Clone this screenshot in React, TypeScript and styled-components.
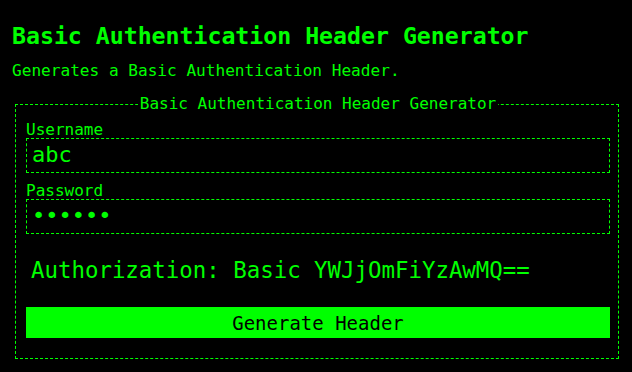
import React, { useState } from 'react';
import styled, { createGlobalStyle } from 'styled-components';

const GlobalStyle = createGlobalStyle`
  html, body {
    margin: 0;
    padding: 0;
    background: #000000;
  }
`;

const GREEN = '#00ff00';
const MONO = '"DejaVu Sans Mono", "Liberation Mono", monospace';

const Page = styled.div`
  background: #000000;
  color: ${GREEN};
  font-family: ${MONO};
  padding: 22px 13px 20px 12px;
  min-height: 372px;
  box-sizing: border-box;
`;

const Title = styled.h1`
  margin: 0;
  font-size: 23.2px;
  line-height: 28px;
  font-weight: bold;
`;

const Subtitle = styled.p`
  margin: 11px 0 0;
  font-size: 16.1px;
  line-height: 20px;
`;

const Panel = styled.fieldset`
  margin: 13px 0 0 3px;
  padding: 7px 8px 20px 10px;
  border: 1px dashed ${GREEN};
  min-width: 0;
`;

const Legend = styled.legend`
  margin: 0 auto;
  padding: 0 2px;
  font-size: 16px;
  line-height: 20px;
`;

const Field = styled.div<{ $gap?: number }>`
  display: flex;
  flex-direction: column;
  margin-top: ${(p) => p.$gap ?? 0}px;
`;

const Label = styled.label`
  font-size: 16px;
  line-height: 17px;
`;

const Input = styled.input`
  box-sizing: border-box;
  width: 100%;
  height: 35px;
  margin: 0;
  padding: 0 5px 2px;
  background: #000000;
  color: ${GREEN};
  border: 1px dashed ${GREEN};
  border-radius: 0;
  font-family: ${MONO};
  font-size: 22px;
  outline: none;
`;

const Result = styled.div`
  margin: 23px 0 0 5px;
  font-size: 22.4px;
  line-height: 26px;
  white-space: nowrap;
`;

const Button = styled.button`
  display: block;
  width: 100%;
  height: 31px;
  margin-top: 24px;
  padding: 0;
  border: none;
  border-radius: 0;
  background: ${GREEN};
  color: #000000;
  font-family: ${MONO};
  font-size: 19px;
  cursor: pointer;
`;

const makeHeader = (user: string, pass: string) =>
  `Authorization: Basic ${btoa(`${user}:${pass}`)}`;

export default function App() {
  const [username, setUsername] = useState('abc');
  const [password, setPassword] = useState('abc001');
  const [header, setHeader] = useState(makeHeader('abc', 'abc001'));

  return (
    <Page>
      <GlobalStyle />
      <Title>Basic Authentication Header Generator</Title>
      <Subtitle>Generates a Basic Authentication Header.</Subtitle>
      <Panel>
        <Legend>Basic Authentication Header Generator</Legend>
        <Field>
          <Label htmlFor="username">Username</Label>
          <Input
            id="username"
            value={username}
            onChange={(e) => setUsername(e.target.value)}
          />
        </Field>
        <Field $gap={9}>
          <Label htmlFor="password">Password</Label>
          <Input
            id="password"
            type="password"
            value={password}
            onChange={(e) => setPassword(e.target.value)}
          />
        </Field>
        <Result>{header}</Result>
        <Button onClick={() => setHeader(makeHeader(username, password))}>
          Generate Header
        </Button>
      </Panel>
    </Page>
  );
}
